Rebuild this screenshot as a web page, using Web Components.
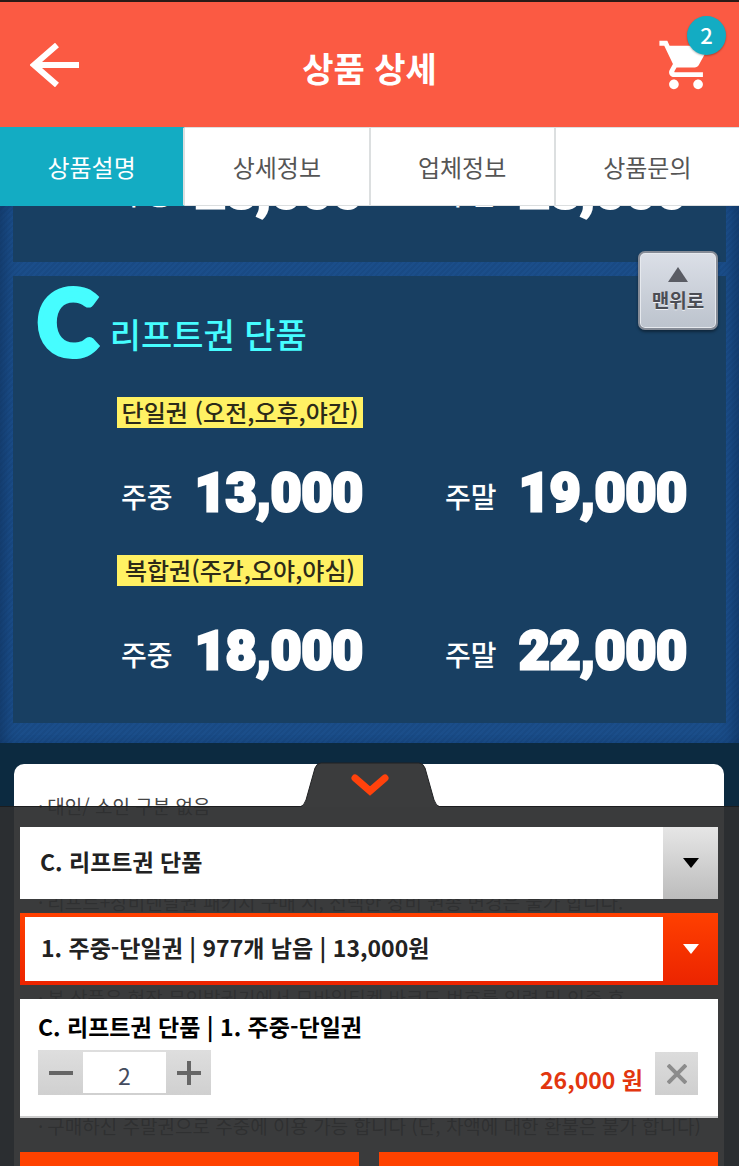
<!DOCTYPE html>
<html lang="ko">
<head>
<meta charset="utf-8">
<meta name="viewport" content="width=device-width, initial-scale=1">
<title>상품 상세</title>
<style>
  body {
    margin: 0;
    font-family: "Noto Sans CJK KR", sans-serif;
    font-size: 24px;
  }
</style>
</head>
<body>
<product-page>
  <app-header slot="header" count="2">상품 상세</app-header>
  <tab-bar slot="header" tabs="상품설명,상세정보,업체정보,상품문의"></tab-bar>

  <fare-board>
    <fare-panel clipped>
      <fare-row weekday="28,000" weekend="28,000"></fare-row>
    </fare-panel>
    <fare-panel letter="C" heading="리프트권 단품">
      <fare-row tag="단일권 (오전,오후,야간)" weekday="13,000" weekend="19,000"></fare-row>
      <fare-row tag="복합권(주간,오야,야심)" weekday="18,000" weekend="22,000"></fare-row>
    </fare-panel>
  </fare-board>
  <notice-list></notice-list>

  <top-button slot="float">맨위로</top-button>

  <option-sheet slot="sheet">
    <option-select label="상품 선택" value="C. 리프트권 단품"></option-select>
    <option-select label="옵션 선택" value="1. 주중-단일권 | 977개 남음 | 13,000원" active></option-select>
    <cart-line price="26,000 원" quantity="2">C. 리프트권 단품 | 1. 주중-단일권</cart-line>
  </option-sheet>
</product-page>

<script>
class ProductPage extends HTMLElement {
  constructor() {
    super();
    this.attachShadow({ mode: 'open' });
    this.shadowRoot.innerHTML = `
      <style>
        :host {
          display: flex;
          flex-direction: column;
          height: 100vh;
          overflow: hidden;
        }
        .body {
          flex: 1;
          min-height: 0;
          display: grid;
          grid-template: minmax(0, 1fr) / minmax(0, 1fr);
          position: relative;
          background: #0c2a40;
        }
        main, .sheet {
          grid-area: 1 / 1;
        }
        main {
          overflow: hidden;
        }
        .sheet {
          align-self: end;
          position: relative;
        }
        .float {
          position: absolute;
          top: 45px;
          right: 21px;
        }
      </style>
      <slot name="header"></slot>
      <div class="body">
        <main><slot></slot></main>
        <div class="float"><slot name="float"></slot></div>
        <div class="sheet"><slot name="sheet"></slot></div>
      </div>
    `;
  }
}

class AppHeader extends HTMLElement {
  constructor() {
    super();
    this.attachShadow({ mode: 'open' });
  }

  connectedCallback() {
    const count = this.getAttribute('count') || '0';

    this.shadowRoot.innerHTML = `
      <style>
        :host {
          display: block;
          border-top: 2px solid #2a1a16;
          background: #fb5a43;
          color: #fff;
        }
        header {
          display: grid;
          grid-template-columns: 1fr auto 1fr;
          align-items: center;
          height: 125px;
          padding: 0 24px;
        }
        h1 {
          margin: 0;
          padding-top: 6px;
          font-size: 34px;
          line-height: 48px;
          font-weight: 700;
        }
        button {
          padding: 0;
          border: 0;
          background: none;
          color: inherit;
          font: inherit;
        }
        svg {
          display: block;
        }
        .back {
          justify-self: start;
          padding-left: 6px;
        }
        .cart {
          position: relative;
          justify-self: end;
        }
        .badge {
          position: absolute;
          top: -20px;
          right: -11px;
          width: 39px;
          height: 39px;
          border-radius: 50%;
          background: #13acc3;
          box-shadow: 0 1px 2px rgba(0, 0, 0, 0.3);
          font-size: 22px;
          line-height: 36px;
          font-weight: 500;
        }
      </style>
      <header>
        <button class="back" type="button" aria-label="뒤로">
          <svg width="50" height="44" viewBox="0 0 50 44" fill="none" stroke="#fff" stroke-width="6">
            <path d="M27 2L4 22l23 20M5 22h44"/>
          </svg>
        </button>
        <h1><slot></slot></h1>
        <button class="cart" type="button" aria-label="장바구니">
          <svg width="58" height="58" viewBox="0 0 24 24" fill="#fff">
            <path d="M7 18c-1.1 0-1.99.9-1.99 2S5.9 22 7 22s2-.9 2-2-.9-2-2-2zM1 2v2h2l3.6 7.59-1.35 2.45c-.16.28-.25.61-.25.96 0 1.1.9 2 2 2h12v-2H7.42c-.14 0-.25-.11-.25-.25l.03-.12.9-1.63h7.45c.75 0 1.41-.41 1.75-1.03l3.58-6.49A1 1 0 0 0 20.01 4H5.21l-.94-2H1zm16 16c-1.1 0-1.99.9-1.99 2s.89 2 1.99 2 2-.9 2-2-.9-2-2-2z"/>
          </svg>
          <span class="badge">${count}</span>
        </button>
      </header>
    `;
  }
}

class TabBar extends HTMLElement {
  constructor() {
    super();
    this.attachShadow({ mode: 'open' });
  }

  connectedCallback() {
    const tabs = (this.getAttribute('tabs') || '').split(',');

    this.shadowRoot.innerHTML = `
      <style>
        :host {
          display: block;
        }
        nav {
          display: flex;
          height: 79px;
        }
        button {
          flex: 1;
          padding: 0;
          border: solid #dcdfe0;
          border-width: 1px 2px 1px 0;
          background: #fff;
          color: #555;
          font: inherit;
        }
        button:last-child {
          border-right: 0;
        }
        button[aria-current] {
          border-color: #13acc3 #dcdfe0 #13acc3 #13acc3;
          background: #13acc3;
          color: #fff;
        }
      </style>
      <nav>
        ${tabs.map((tab, i) => `<button type="button" ${i === 0 ? 'aria-current="page"' : ''}>${tab}</button>`).join('')}
      </nav>
    `;
  }
}

class FareBoard extends HTMLElement {
  constructor() {
    super();
    this.attachShadow({ mode: 'open' });
    this.shadowRoot.innerHTML = `
      <style>
        :host {
          display: flex;
          flex-direction: column;
          gap: 14px;
          padding: 0 13px 20px;
          background: repeating-linear-gradient(135deg, #1b4e8a 0 2px, #194a84 2px 4px);
          box-shadow: inset 12px 0 12px -6px rgba(12, 42, 80, 0.5), inset -12px 0 12px -6px rgba(12, 42, 80, 0.5);
        }
      </style>
      <slot></slot>
    `;
  }
}

class FarePanel extends HTMLElement {
  constructor() {
    super();
    this.attachShadow({ mode: 'open' });
  }

  connectedCallback() {
    const letter = this.getAttribute('letter');
    const heading = this.getAttribute('heading');

    this.shadowRoot.innerHTML = `
      <style>
        :host {
          display: flex;
          flex-direction: column;
          justify-content: flex-end;
          gap: 31px;
          padding: 0 39px 41px 104px;
          background: #183f62;
        }
        /* the panel above has been scrolled under the tabs */
        :host([clipped]) {
          height: 15px;
          overflow: hidden;
        }
        h2 {
          display: flex;
          align-items: center;
          gap: 12px;
          height: 90px;
          margin: 0 0 0 -80px;
          color: #46fdff;
          font-size: 34px;
          line-height: 48px;
          font-weight: 500;
        }
        .letter {
          font-family: Lato, sans-serif;
          font-size: 92px;
          line-height: 90px;
          font-weight: 900;
          -webkit-text-stroke: 5px #46fdff;
        }
        .name {
          padding-top: 26px;
        }
      </style>
      ${heading ? `<h2><span class="letter">${letter}</span><span class="name">${heading}</span></h2>` : ''}
      <slot></slot>
    `;
  }
}

class FareRow extends HTMLElement {
  constructor() {
    super();
    this.attachShadow({ mode: 'open' });
  }

  connectedCallback() {
    const tag = this.getAttribute('tag');

    this.shadowRoot.innerHTML = `
      <style>
        :host {
          display: block;
          color: #fff;
        }
        .grid {
          display: grid;
          grid-template-columns: 1fr 1fr;
          column-gap: 78px;
        }
        h3 {
          height: 31px;
          margin: 0 0 34px;
          background: #fff163;
          color: #2c2a18;
          font-size: 24px;
          line-height: 30px;
          font-weight: 500;
          text-align: center;
          white-space: nowrap;
        }
        dl {
          display: flex;
          align-items: center;
          justify-content: space-between;
          height: 62px;
          margin: 0;
          grid-row: 2;
        }
        dt {
          padding: 6px 0 0 4px;
          font-size: 28px;
          line-height: 40px;
          font-weight: 500;
        }
        dd {
          margin: 0;
          font-family: Roboto, sans-serif;
          font-size: 53px;
          line-height: 62px;
          font-weight: 900;
          -webkit-text-stroke: 3px #fff;
        }
      </style>
      <div class="grid">
        ${tag ? `<h3>${tag}</h3>` : ''}
        <dl><dt>주중</dt><dd>${this.getAttribute('weekday')}</dd></dl>
        <dl><dt>주말</dt><dd>${this.getAttribute('weekend')}</dd></dl>
      </div>
    `;
  }
}

// line = the text line of the notice that the entry starts on
const notices = [
  { line: 1, text: '대인/ 소인 구분 없음' },
  { line: 4, text: '리프트+장비렌탈권 패키지 구매 시, 선택한 장비 권종 변경은 불가 합니다.' },
  { line: 7, text: '본 상품은 현장 무인발권기에서 모바일티켓 바코드 번호를 입력 및 인증 후' },
  { line: 11, text: '구매하신 주말권으로 주중에 이용 가능 합니다 (단, 차액에 대한 환불은 불가 합니다)' }
];

class NoticeList extends HTMLElement {
  constructor() {
    super();
    this.attachShadow({ mode: 'open' });
    this.shadowRoot.innerHTML = `
      <style>
        :host {
          display: block;
          margin: 21px 15px 0 14px;
          border-radius: 10px 10px 0 0;
          background: #fff;
          color: #444;
        }
        ul {
          display: grid;
          grid-auto-rows: 32px;
          margin: 0;
          padding: 26px 0 60px 24px;
          list-style: none;
          font-size: 19px;
          line-height: 32px;
          white-space: nowrap;
        }
        li::before {
          content: '·';
          margin-right: 4px;
        }
      </style>
      <ul>
        ${notices.map(n => `<li style="grid-row: ${n.line}">${n.text}</li>`).join('')}
      </ul>
    `;
  }
}

class TopButton extends HTMLElement {
  constructor() {
    super();
    this.attachShadow({ mode: 'open' });
    this.shadowRoot.innerHTML = `
      <style>
        :host {
          display: block;
        }
        button {
          display: flex;
          flex-direction: column;
          align-items: center;
          justify-content: center;
          gap: 4px;
          width: 80px;
          height: 79px;
          padding: 0;
          border: 2px solid #858b96;
          border-radius: 7px;
          background: linear-gradient(#dbdfe7, #bcc3cd);
          box-shadow: inset 0 0 0 1px #e6e9ee, 0 2px 3px rgba(0, 0, 0, 0.4);
          color: #4b4d54;
          font: inherit;
          font-size: 19px;
          line-height: 28px;
          font-weight: 700;
          text-shadow: 0 1px 0 #eef1f5;
        }
      </style>
      <button type="button">
        <svg width="20" height="15" viewBox="0 0 20 15" fill="#5a5c64"><path d="M10 0l10 15H0z"/></svg>
        <slot></slot>
      </button>
    `;
  }
}

class OptionSheet extends HTMLElement {
  constructor() {
    super();
    this.attachShadow({ mode: 'open' });
    this.shadowRoot.innerHTML = `
      <style>
        :host {
          display: block;
        }
        .handle {
          display: block;
          position: relative;
          margin: 0 auto -1px;
          padding: 0;
          border: 0;
          background: none;
        }
        svg {
          display: block;
        }
        .panel {
          display: flex;
          flex-direction: column;
          gap: 14px;
          padding: 20px 21px 0 20px;
          border-top: 1px solid #1c1d1f;
          background: rgba(46, 47, 48, 0.94);
        }
        .actions {
          display: flex;
          gap: 20px;
          margin-top: 20px;
        }
        .actions button {
          flex: 1;
          height: 14px;
          padding: 0;
          border: 0;
          background: #ff4200;
        }
      </style>
      <button class="handle" type="button" aria-label="옵션 닫기">
        <svg width="140" height="45" viewBox="0 0 140 45">
          <path d="M0 45Q4 44 6 38L15 6Q17 1 21 1H119Q123 1 125 6L134 38Q136 44 140 45Z" fill="#3b3c3d"/>
          <path d="M0 45Q4 44 6 38L15 6Q17 1 21 1H119Q123 1 125 6L134 38Q136 44 140 45" fill="none" stroke="#202123"/>
          <path d="M55 16l15 13 15-13" fill="none" stroke="#ff420c" stroke-width="7" stroke-linecap="round"/>
        </svg>
      </button>
      <div class="panel">
        <slot></slot>
        <div class="actions">
          <button type="button" aria-label="장바구니 담기"></button>
          <button type="button" aria-label="바로 구매"></button>
        </div>
      </div>
    `;
  }
}

class OptionSelect extends HTMLElement {
  constructor() {
    super();
    this.attachShadow({ mode: 'open' });
  }

  connectedCallback() {
    this.shadowRoot.innerHTML = `
      <style>
        :host {
          display: grid;
          grid-template-columns: 1fr 55px;
          height: 72px;
          background: linear-gradient(#e6e6e6, #bcbcbc);
          color: #000;
        }
        :host([active]) {
          background: linear-gradient(#ff4000, #ec2400);
          color: #fff;
        }
        select {
          appearance: none;
          min-width: 0;
          padding: 0 0 4px 20px;
          border: 0;
          border-radius: 0;
          background: #fff;
          color: #222;
          font: inherit;
          font-size: 23px;
          font-weight: 700;
        }
        :host([active]) select {
          margin: 4px 0 4px 5px;
          padding-left: 16px;
        }
        svg {
          place-self: center;
        }
      </style>
      <select aria-label="${this.getAttribute('label')}">
        <option>${this.getAttribute('value')}</option>
      </select>
      <svg width="16" height="10" viewBox="0 0 16 10" fill="currentColor"><path d="M0 0h16L8 10z"/></svg>
    `;
  }
}

class CartLine extends HTMLElement {
  constructor() {
    super();
    this.attachShadow({ mode: 'open' });
  }

  connectedCallback() {
    this.shadowRoot.innerHTML = `
      <style>
        :host {
          display: block;
          padding: 12px 20px 21px 18px;
          border-bottom: 2px solid #ccc;
          background: #fff;
          color: #000;
          font-size: 23px;
        }
        p {
          margin: 0 0 9px;
          line-height: 30px;
          font-weight: 700;
        }
        .row, .stepper {
          display: flex;
          align-items: center;
        }
        .stepper {
          background: linear-gradient(#dedede, #d0d0d0);
        }
        button {
          display: grid;
          place-items: center;
          width: 45px;
          height: 45px;
          padding: 0;
          border: 0;
          background: none;
        }
        input {
          box-sizing: border-box;
          width: 83px;
          height: 41px;
          padding: 4px 0 0;
          border: 0;
          background: #fff;
          color: #444b5e;
          font: inherit;
          text-align: center;
        }
        output {
          margin-left: auto;
          padding-top: 12px;
          color: #e2360f;
          line-height: 32px;
          font-weight: 700;
        }
        .remove {
          width: 43px;
          height: 43px;
          margin: 2px 0 0 12px;
          background: linear-gradient(#dcdcdc, #cfcfcf);
        }
      </style>
      <p><slot></slot></p>
      <div class="row">
        <div class="stepper">
          <button type="button" aria-label="수량 줄이기">
            <svg width="24" height="24" stroke="#666" stroke-width="4"><path d="M0 12h24"/></svg>
          </button>
          <input type="text" inputmode="numeric" aria-label="수량" value="${this.getAttribute('quantity')}">
          <button type="button" aria-label="수량 늘리기">
            <svg width="24" height="24" stroke="#666" stroke-width="4"><path d="M0 12h24M12 0v24"/></svg>
          </button>
        </div>
        <output>${this.getAttribute('price')}</output>
        <button class="remove" type="button" aria-label="삭제">
          <svg width="20" height="20" stroke="#8c8c8c" stroke-width="4"><path d="M1 1l18 18M19 1L1 19"/></svg>
        </button>
      </div>
    `;
  }
}

customElements.define('product-page', ProductPage);
customElements.define('app-header', AppHeader);
customElements.define('tab-bar', TabBar);
customElements.define('fare-board', FareBoard);
customElements.define('fare-panel', FarePanel);
customElements.define('fare-row', FareRow);
customElements.define('notice-list', NoticeList);
customElements.define('top-button', TopButton);
customElements.define('option-sheet', OptionSheet);
customElements.define('option-select', OptionSelect);
customElements.define('cart-line', CartLine);
</script>
</body>
</html>
